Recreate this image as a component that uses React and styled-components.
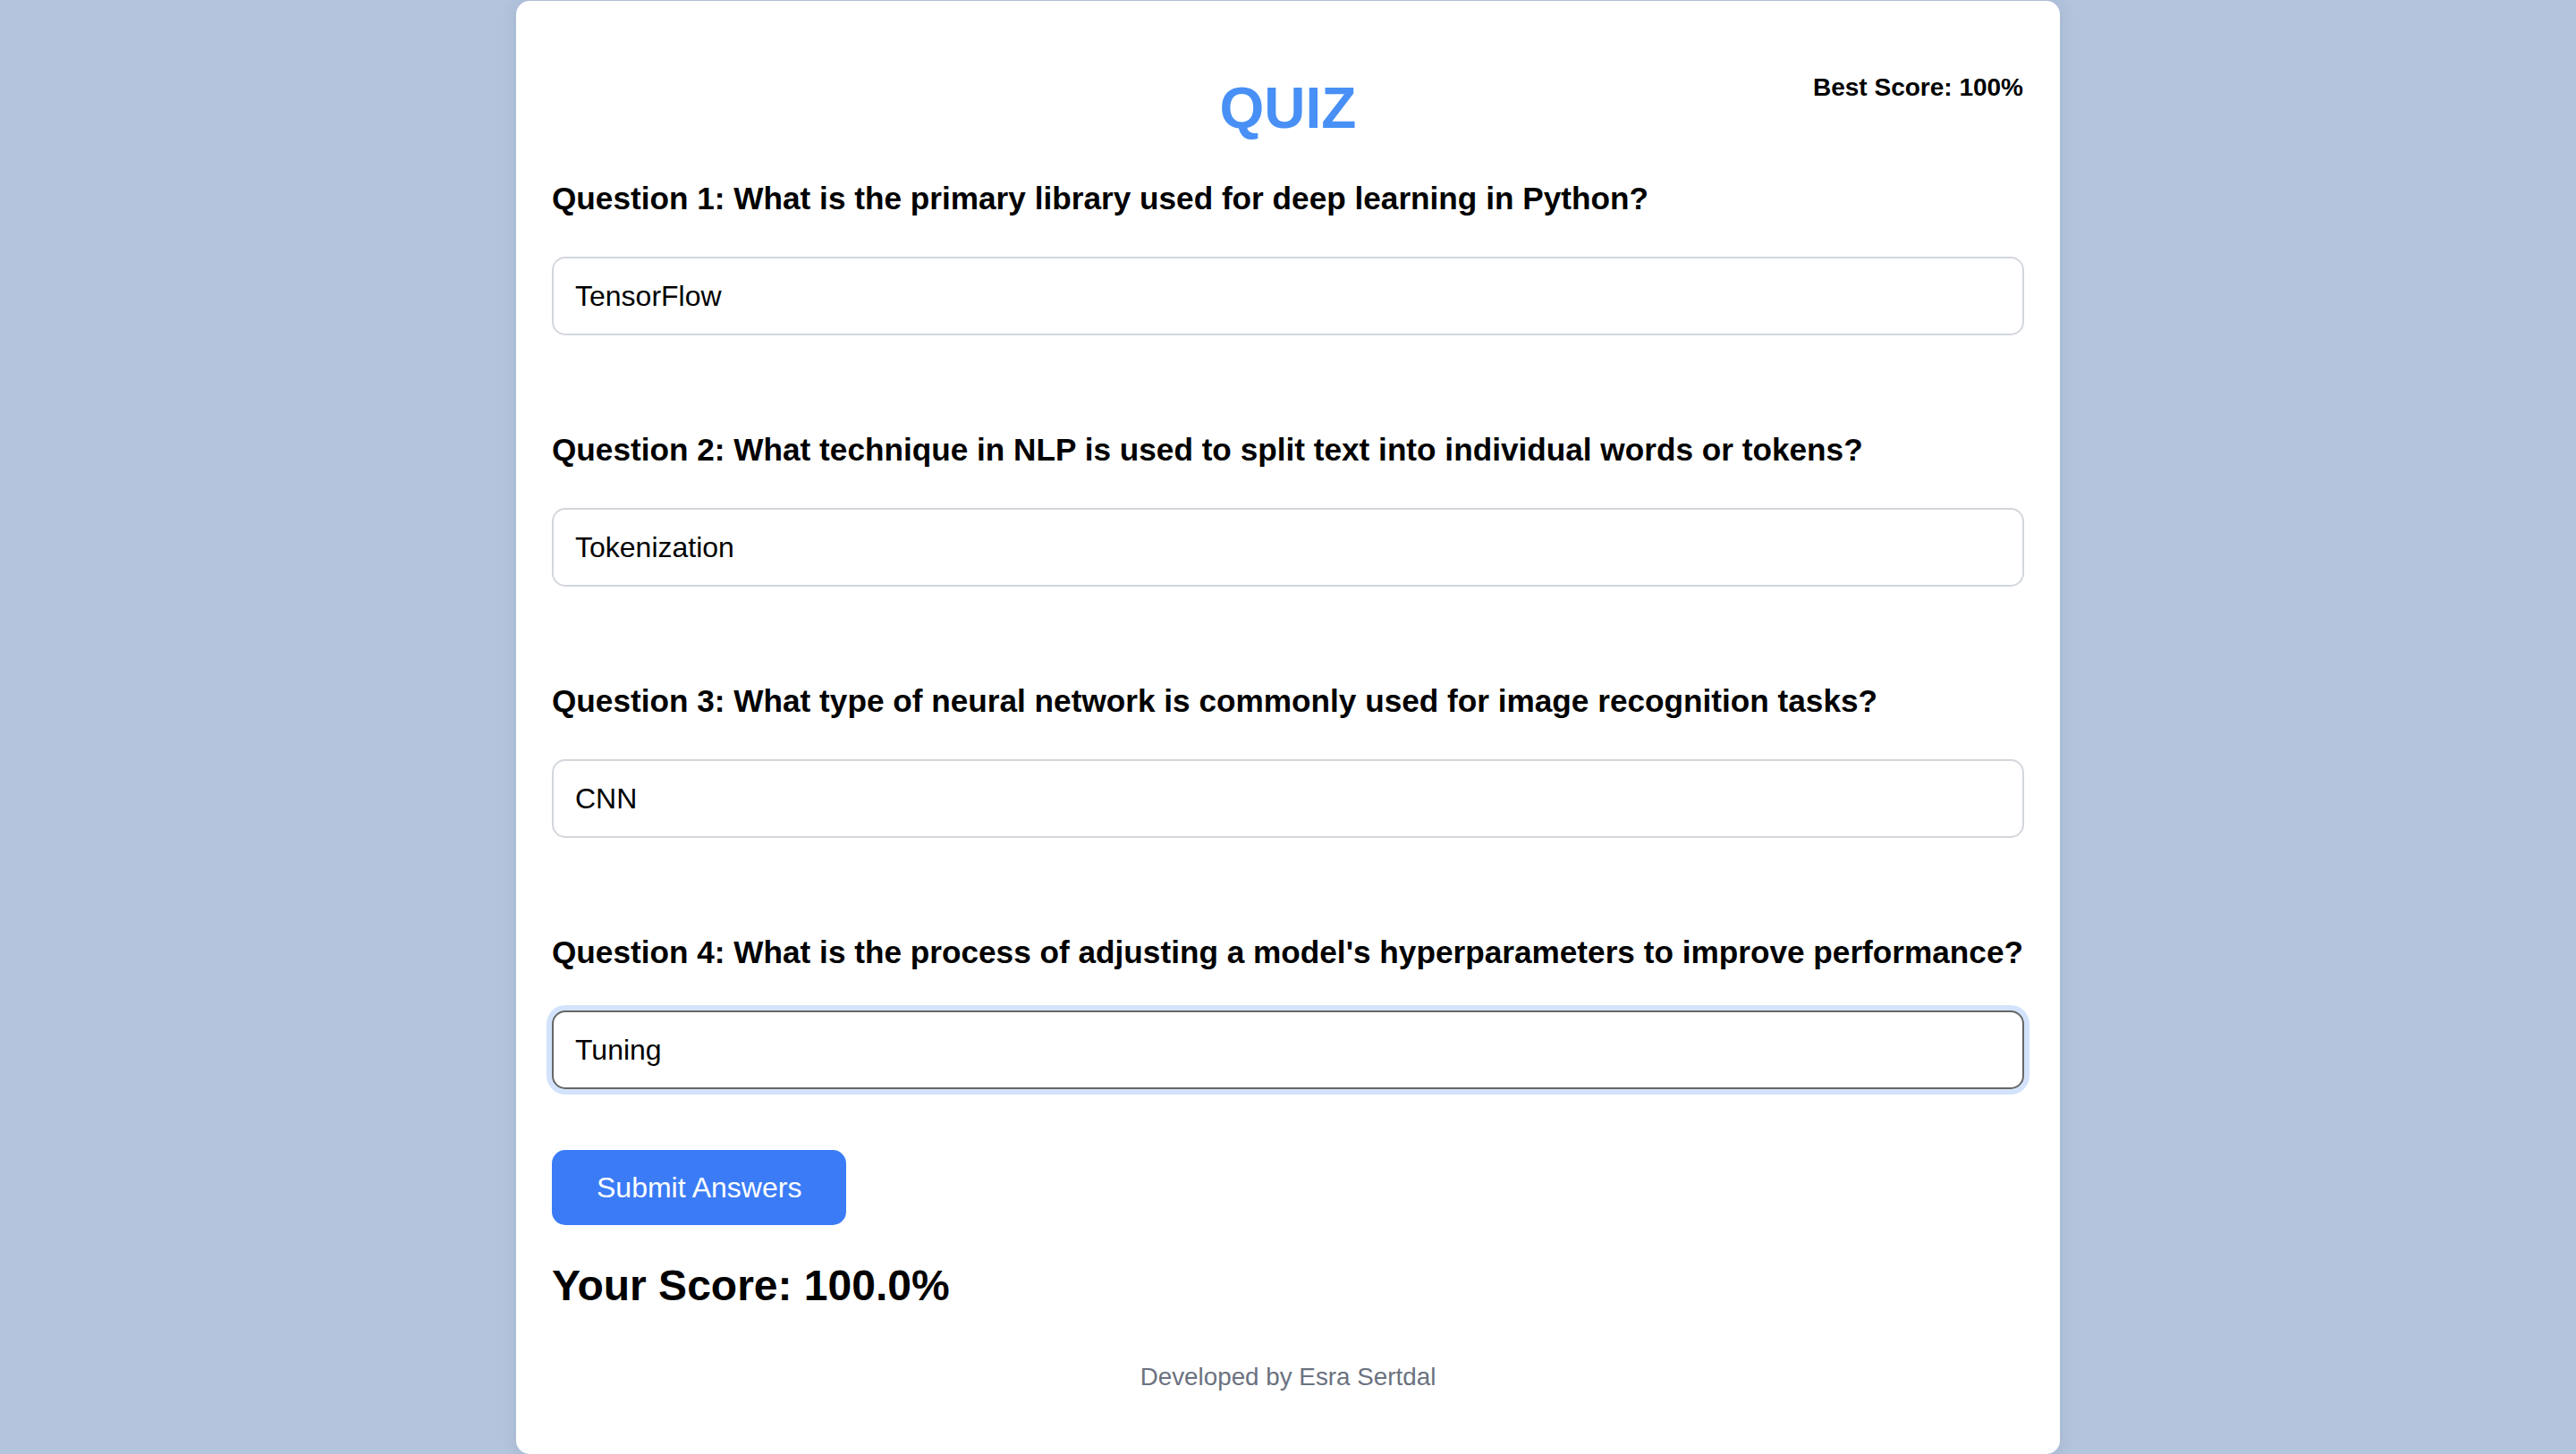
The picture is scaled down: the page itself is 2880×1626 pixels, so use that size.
import React from 'react';
import styled, { createGlobalStyle } from 'styled-components';

const PAGE_BG = '#b4c4dd';
const BLUE = '#3b7cf6';
const TITLE_BLUE = '#4890f5';
const FONT = '"Liberation Sans", Arial, Helvetica, sans-serif';

const GlobalStyle = createGlobalStyle`
  html, body {
    margin: 0;
    padding: 0;
    background: ${PAGE_BG};
    font-family: ${FONT};
  }
`;

const Page = styled.div`
  min-height: 1626px;
  padding-top: 1px;
  box-sizing: border-box;
  display: flex;
  justify-content: center;
`;

const Card = styled.div`
  position: relative;
  width: 1726px;
  box-sizing: border-box;
  background: #fff;
  border-radius: 15px;
  box-shadow: 0 0 18px rgba(40, 60, 100, 0.12);
  padding: 82px 40px 69px;
  display: flex;
  flex-direction: column;
`;

const Title = styled.h1`
  margin: 0 0 43px;
  text-align: center;
  font-size: 64px;
  line-height: 76px;
  font-weight: 700;
  color: ${TITLE_BLUE};
`;

const BestScore = styled.div`
  position: absolute;
  top: 81px;
  right: 41px;
  font-size: 28px;
  line-height: 32px;
  font-weight: 700;
  color: #000;
`;

const QuestionBlock = styled.div`
  display: flex;
  flex-direction: column;
  margin-bottom: ${(p) => (p.$last ? '68px' : '108px')};
`;

const Label = styled.label`
  font-size: 35.2px;
  line-height: 40px;
  font-weight: 700;
  color: #000;
  white-space: nowrap;
  margin-bottom: 45px;
`;

const AnswerInput = styled.input`
  height: 88px;
  box-sizing: border-box;
  border: 2px solid ${(p) => (p.$focused ? '#666' : '#d3d7dc')};
  border-radius: 15px;
  padding: 0 24px;
  font-family: ${FONT};
  font-size: 32px;
  color: #000;
  background: #fff;
  outline: none;
  box-shadow: ${(p) => (p.$focused ? '0 0 0 6px #d3e3fc' : 'none')};
`;

const SubmitButton = styled.button`
  align-self: flex-start;
  height: 84px;
  padding: 0 50px;
  border: none;
  border-radius: 15px;
  background: ${BLUE};
  color: #fff;
  font-family: ${FONT};
  font-size: 32px;
  cursor: pointer;
  margin-bottom: 41px;
`;

const Score = styled.h2`
  margin: 0 0 59px;
  font-size: 48px;
  line-height: 54px;
  font-weight: 700;
  color: #000;
`;

const Footer = styled.p`
  margin: 0;
  text-align: center;
  font-size: 27.8px;
  line-height: 32px;
  color: #6b7280;
`;

const questions = [
  { q: 'What is the primary library used for deep learning in Python?', a: 'TensorFlow' },
  { q: 'What technique in NLP is used to split text into individual words or tokens?', a: 'Tokenization' },
  { q: 'What type of neural network is commonly used for image recognition tasks?', a: 'CNN' },
  { q: "What is the process of adjusting a model's hyperparameters to improve performance?", a: 'Tuning' },
];

export default function App() {
  return (
    <>
      <GlobalStyle />
      <Page>
        <Card>
          <BestScore>Best Score: 100%</BestScore>
          <Title>QUIZ</Title>
          {questions.map((item, i) => {
            const last = i === questions.length - 1;
            return (
              <QuestionBlock key={i} $last={last}>
                <Label htmlFor={`q${i}`}>Question {i + 1}: {item.q}</Label>
                <AnswerInput id={`q${i}`} value={item.a} readOnly $focused={last} />
              </QuestionBlock>
            );
          })}
          <SubmitButton>Submit Answers</SubmitButton>
          <Score>Your Score: 100.0%</Score>
          <Footer>Developed by Esra Sertdal</Footer>
        </Card>
      </Page>
    </>
  );
}
